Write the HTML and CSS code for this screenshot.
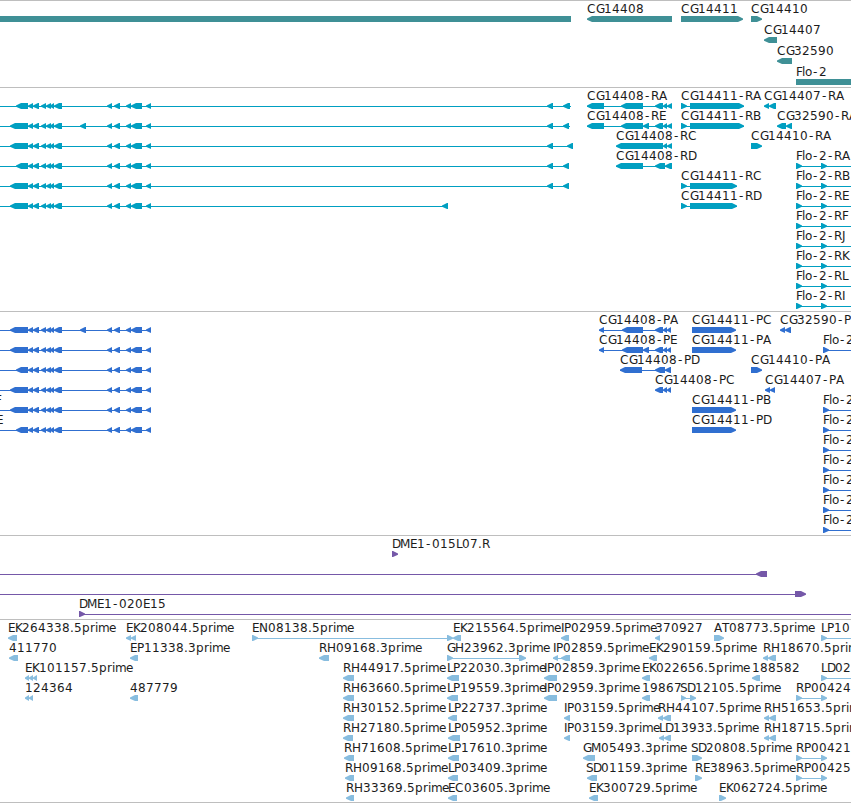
FILE: index.html
```html
<!DOCTYPE html>
<html lang="en">

<head>
    <meta charset="UTF-8">
    <meta name="viewport" content="width=device-width, initial-scale=1.0">
    <title>Genome browser</title>
    <link rel="stylesheet" href="styles.css">
</head>

<body>
    <div class="browser">
        <div class="track genes" id="genes"></div>
        <div class="track transcripts" id="transcripts"></div>
        <div class="track proteins" id="proteins"></div>
        <div class="track clones" id="clones"></div>
        <div class="track ests" id="ests"></div>
    </div>

    <script src="tracks.js"></script>
</body>

</html>
```

FILE: styles.css
```css
:root {
    --border-color: #bebebe;
    --gene-color: #3f9096;
    --transcript-color: #009fc1;
    --protein-color: #306fd0;
    --clone-color: #7558a8;
    --est-color: #88bddf;
}

* {
    margin: 0;
    padding: 0;
    box-sizing: border-box;
}

body {
    background: white;
    overflow: hidden;
}

.browser {
    display: flex;
    flex-direction: column;
    width: 851px;
    border-bottom: 1px solid var(--border-color);
}

.track {
    border-top: 1px solid var(--border-color);
    padding-bottom: 3px;
}

.row {
    display: block;
    width: 100%;
    height: 20px;
    overflow: visible;
}

.label {
    font-family: "DejaVu Sans", Verdana, sans-serif;
    font-size: 12px;
    fill: #1c1c1c;
}

.genes {
    color: var(--gene-color);
    padding-bottom: 2px;
}

.genes .row {
    height: 21px;
}

.transcripts {
    color: var(--transcript-color);
}

.proteins {
    color: var(--protein-color);
}

.clones {
    color: var(--clone-color);
}

.ests {
    color: var(--est-color);
    padding-bottom: 2px;
}
```

FILE: tracks.js
```javascript
// One string per row. 587:672< is an arrow to the left, > to the right,
// = a plain block, ~ a thin line, and NAME@587 a label.
const exons = '28:33< 33:39< 41:46< 46:51< 50:54< 54:62< 107:112< 114:120< 126:131< 131:142< 146:151<';
const flo = '796:851~ 796:802> 821:827>';
const floP = 'Flo-2@823 823:851~ 823:829>';
const rp = '796:826~ 796:802> 821:827>';

const tracks = {
    genes: [
        '0:571= CG14408@587 587:672< CG14411@681 681:743> CG14410@751 751:762>',
        'CG14407@764 764:777<',
        'CG32590@777 777:792<',
        'Flo-2@796 796:851='
    ],
    transcripts: [
        `0:571~ 16:28< ${exons} 547:553< 563:570< CG14408-RA@587 587:672~ 587:604< 621:643< 655:663< 663:667< 667:672< CG14411-RA@681 681:744~ 681:687> 690:744> CG14407-RA@764 764:769< 769:776<`,
        `0:570~ 10:28< 80:86< ${exons} 547:553< 563:569< CG14408-RE@587 587:672~ 587:604< 621:643< 643:649< 655:663< 663:667< 667:672< CG14411-RB@681 681:744~ 681:687> 690:744> CG32590-RA@777 777:786< 786:792<`,
        `0:573~ 10:28< ${exons} 547:553< 567:573< CG14408-RC@616 616:663< 663:667< 667:672< CG14410-RA@751 751:762>`,
        `0:569~ 16:28< ${exons} 547:553< 563:569< CG14408-RD@616 616:672~ 616:643< 655:665< 665:672< Flo-2-RA@796 ${flo}`,
        `0:569~ 10:28< ${exons} 547:553< 563:569< CG14411-RC@681 681:737~ 681:687> 690:737> Flo-2-RB@796 ${flo}`,
        `0:448~ 10:28< ${exons} 442:448< CG14411-RD@681 681:737~ 681:687> 690:737> Flo-2-RE@796 ${flo}`,
        `Flo-2-RF@796 ${flo}`,
        `Flo-2-RJ@796 ${flo}`,
        `Flo-2-RK@796 ${flo}`,
        `Flo-2-RL@796 ${flo}`,
        `Flo-2-RI@796 ${flo}`
    ],
    proteins: [
        `0:151~ 10:28< 80:86< ${exons} CG14408-PA@599 599:671~ 599:604< 622:643< 655:663< 663:667< 667:671< CG14411-PC@692 692:736> CG32590-PA@780 780:785< 785:791<`,
        `0:151~ 10:28< ${exons} CG14408-PE@599 599:671~ 599:604< 622:643< 643:649< 655:663< 663:667< 667:671< CG14411-PA@692 692:736> ${floP}`,
        `0:151~ 16:28< ${exons} CG14408-PD@620 620:671~ 620:642< 655:665< 665:671< CG14410-PA@751 751:762>`,
        `0:151~ 10:28< ${exons} CG14408-PC@655 655:663< 663:667< 667:671< CG14407-PA@765 765:770< 770:775<`,
        `F@-5 0:151~ 10:28< ${exons} CG14411-PB@692 692:736> ${floP}`,
        `E@-4 0:151~ 16:28< ${exons} CG14411-PD@692 692:736> ${floP}`,
        floP,
        floP,
        floP,
        floP,
        floP
    ],
    clones: [
        'DME1-015L07.R@392 392:398>',
        '0:767~ 756:767<',
        '0:805~ 795:806>',
        'DME1-020E15@79 79:851~ 79:85>'
    ],
    ests: [
        'EK264338.5prime@8 8:17< EK208044.5prime@126 126:131< 131:136< EN08138.5prime@252 252:450~ 252:258> 447:453> EK215564.5prime@453 453:461< IP02959.5prime@561 561:569< 370927@655 655:660< AT08773.5prime@714 714:724> LP10@821 821:851~ 821:827>',
        '411770@9 9:18< EP11338.3prime@130 130:138< RH09168.3prime@319 319:329< GH23962.3prime@447 447:526~ 447:453> 519:526> IP02859.5prime@553 553:570~ 553:558< 561:570< EK290159.5prime@649 649:657< RH18670.5prime@763 763:768< 768:776<',
        'EK101157.5prime@25 25:29< 29:33< 33:37< RH44917.5prime@343 343:354< LP22030.3prime@447 447:459< IP02859.3prime@544 544:557< EK022656.5prime@642 642:650< 188582@752 752:760< LD02@821 821:851~ 821:827>',
        `124364@25 25:29< 29:33< 487779@130 130:138< RH63660.5prime@343 343:354< LP19559.3prime@447 447:458< IP02959.3prime@544 544:557< 19867@642 642:650< SD12105.5prime@680 681:696~ 681:686> 690:696> RP00424@796 ${rp}`,
        'RH30152.5prime@343 343:354< LP22737.3prime@448 448:457< IP03159.5prime@564 564:570< RH44107.5prime@658 658:663< 663:671< RH51653.5prime@764 764:769< 769:776<',
        'RH27180.5prime@343 343:353< LP05952.3prime@448 448:460< IP03159.3prime@564 564:570< LD13933.5prime@659 659:664< 664:671< RH18715.5prime@764 764:769< 769:776<',
        `RH71608.5prime@344 344:354< LP17610.3prime@448 448:459< GM05493.3prime@583 583:595< SD20808.5prime@691 692:702> RP00421@796 ${rp}`,
        `RH09168.5prime@345 345:354< LP03409.3prime@448 448:458< SD01159.3prime@586 587:597< RE38963.5prime@695 695:702> RP00425@796 ${rp}`,
        'RH33369.5prime@346 346:354< EC03605.3prime@448 448:457< EK300729.5prime@589 589:598< EK062724.5prime@719 719:726>'
    ]
};

// whole-pixel advance of each character, digits and the rest are 8
const advance = {
    A: 8, C: 9, D: 8, E: 7, F: 6, G: 8, H: 9, I: 3, J: 4, K: 7, L: 6, M: 10,
    N: 9, P: 7, S: 7, T: 7, l: 3, o: 7, r: 5, i: 3, m: 11, '.': 4, '-': 7
};

function drawLabel(text, x) {
    const xs = [];
    for (const ch of text) {
        xs.push(ch === '-' ? x + 1 : x);
        x += advance[ch] || 8;
    }
    return `<text class="label" y="12" x="${xs.join(' ')}">${text}</text>`;
}

// arrow heads are blunt: a 1px tip that widens to the full 6px
function drawFeature(x1, x2, type) {
    const head = Math.min(5, x2 - x1);
    if (type === '~') {
        return `<rect x="${x1}" y="18" width="${x2 - x1}" height="1"/>`;
    }
    if (type === '=') {
        return `<rect x="${x1}" y="15" width="${x2 - x1}" height="6"/>`;
    }
    if (type === '<') {
        return `<polygon points="${x1},17.4 ${x1 + head},15 ${x2},15 ${x2},21 ${x1 + head},21 ${x1},18.8"/>`;
    }
    return `<polygon points="${x1},15 ${x2 - head},15 ${x2},17.4 ${x2},18.8 ${x2 - head},21 ${x1},21"/>`;
}

for (const [id, rows] of Object.entries(tracks)) {
    document.getElementById(id).innerHTML = rows.map(row => {
        const items = row.split(' ').map(item => {
            if (item.includes('@')) {
                const [text, x] = item.split('@');
                return drawLabel(text, Number(x));
            }
            const [x1, x2] = item.slice(0, -1).split(':').map(Number);
            return drawFeature(x1, x2, item.slice(-1));
        });
        return `<svg class="row" fill="currentColor">${items.join('')}</svg>`;
    }).join('');
}
```
